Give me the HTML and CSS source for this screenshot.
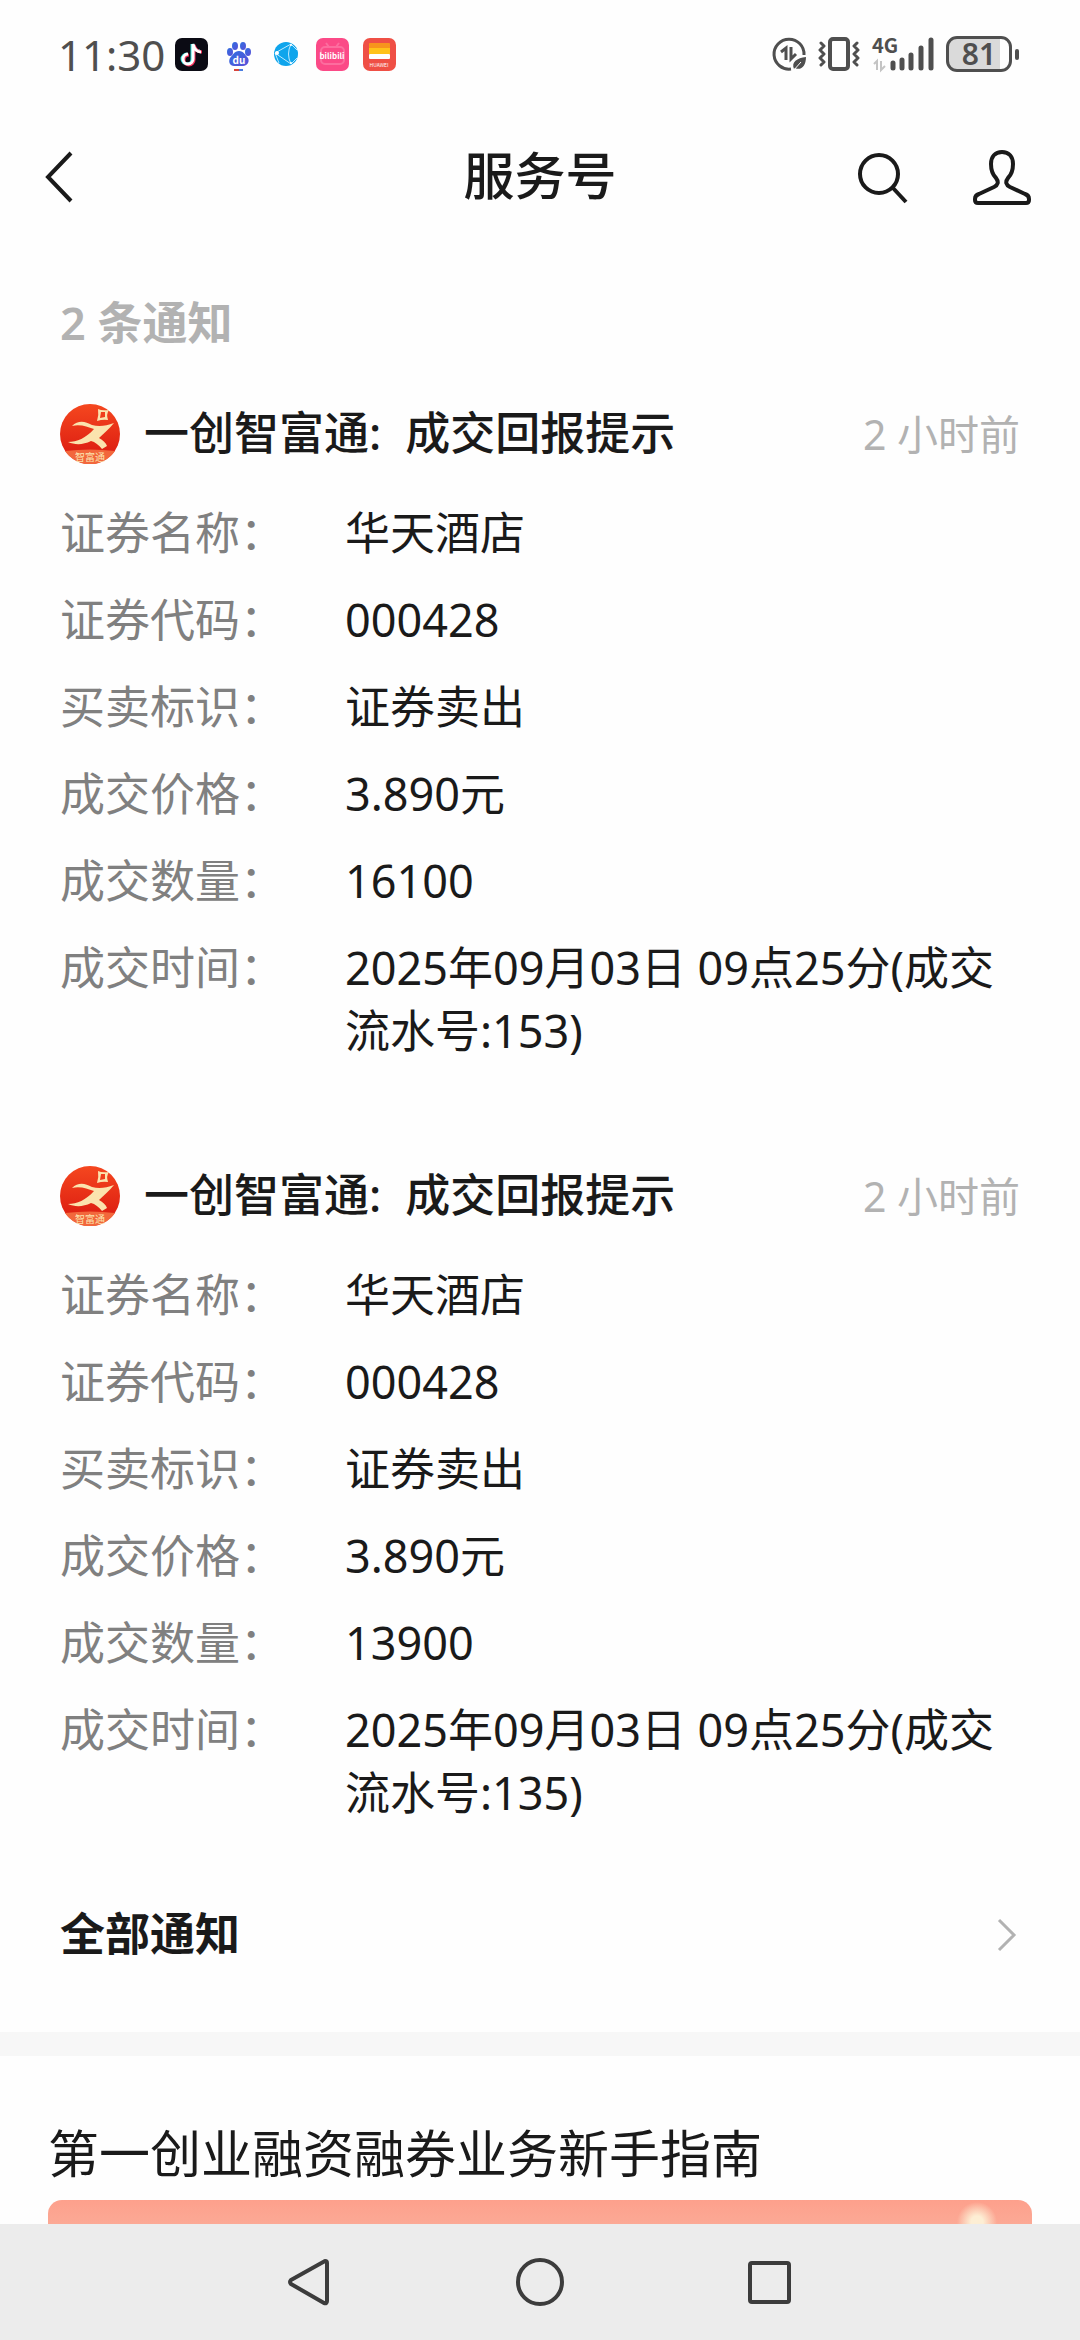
FILE: index.html
```html
<!DOCTYPE html>
<html lang="zh-CN">
<head>
    <meta charset="UTF-8">
    <meta name="viewport" content="width=device-width, initial-scale=1.0">
    <title>服务号</title>
    <link rel="stylesheet" href="styles.css">
</head>
<body>
    <div class="status-bar">
        <div class="status-left">
            <span class="clock">11:30</span>
            <div class="app-icons">
                <svg width="33" height="33" viewBox="0 0 33 33">
                    <rect width="33" height="33" rx="7" fill="#0b0b14"/>
                    <g fill="none" stroke-width="3">
                        <path d="M17 6 V21 A5 5 0 1 1 12 16 M17 6 Q19 13 25 13" stroke="#35e3df"/>
                        <path d="M19 7 V22 A5 5 0 1 1 14 17 M19 7 Q21 14 27 14" stroke="#f5335c"/>
                        <path d="M18 6 V21 A5 5 0 1 1 13 16 M18 6 Q20 14 26 14" stroke="#fff"/>
                    </g>
                </svg>
                <svg width="33" height="33" viewBox="0 0 33 33">
                    <defs>
                        <linearGradient id="paw" x1="0" y1="0" x2="1" y2="1">
                            <stop offset="0" stop-color="#2f6fe0"/>
                            <stop offset="1" stop-color="#5a4fd8"/>
                        </linearGradient>
                    </defs>
                    <g fill="url(#paw)">
                        <ellipse cx="13" cy="8" rx="3" ry="4"/>
                        <ellipse cx="21" cy="8" rx="3" ry="4"/>
                        <ellipse cx="8" cy="14" rx="3" ry="4"/>
                        <ellipse cx="26" cy="14" rx="3" ry="4"/>
                        <path d="M17 13 C22 13 23 17 26 20 C28 24 25 28 21 28 H12 C8 28 6 24 8 20 C11 17 12 13 17 13 Z"/>
                    </g>
                    <text x="17" y="26" class="du-text">du</text>
                    <path d="M12 32 H17" stroke="#d8463c" stroke-width="2"/>
                    <path d="M17 32 H21" stroke="#4a7de0" stroke-width="2"/>
                </svg>
                <svg width="33" height="33" viewBox="0 0 33 33">
                    <circle cx="17" cy="16" r="12" fill="#0fa5ec"/>
                    <path d="M6 15 L22 6 M6 15 L22 26 M22 6 Q17 16 22 26 M22 6 L28 12 M22 26 L28 20 M6 15 L10 25" fill="none" stroke="#bfeaff" stroke-width="1"/>
                    <circle cx="8" cy="15" r="2" fill="#fff"/>
                    <circle cx="22" cy="7" r="1" fill="#fff"/>
                    <circle cx="22" cy="25" r="1" fill="#fff"/>
                </svg>
                <svg width="33" height="33" viewBox="0 0 33 33">
                    <rect width="33" height="33" rx="7" fill="#fb4a87"/>
                    <rect x="5" y="9" width="23" height="17" rx="4" fill="none" stroke="#fc6d9e" stroke-width="2"/>
                    <path d="M10 5 L13 9 M23 5 L20 9" stroke="#fc6d9e" stroke-width="2"/>
                    <text x="16" y="21" class="bili-text">bilibili</text>
                </svg>
                <svg width="33" height="33" viewBox="0 0 33 33">
                    <rect width="33" height="33" rx="7" fill="#ef4f45"/>
                    <rect x="6" y="5" width="21" height="6" rx="1" fill="#f7941d"/>
                    <rect x="6" y="10" width="21" height="6" fill="#ffc21a"/>
                    <rect x="6" y="16" width="21" height="5" rx="1" fill="#fff"/>
                    <text x="16" y="29" class="huawei-text">HUAWEI</text>
                </svg>
            </div>
        </div>
        <div class="status-right">
            <svg width="36" height="36" viewBox="0 0 36 36" fill="none" stroke="#4f4f4f" stroke-width="3">
                <path d="M33 19 A15 15 0 1 0 20 33"/>
                <path d="M10 16 L15 12 V24 M20 11 V23 L25 18"/>
                <path d="M23 33 C20 26 26 22 35 21 C35 30 30 35 24 32 Z" fill="#4f4f4f" stroke="none"/>
                <path d="M22 35 L30 26" stroke="#fefefe" stroke-width="1"/>
            </svg>
            <svg width="42" height="36" viewBox="0 0 42 36" fill="none" stroke="#4f4f4f" stroke-linejoin="round" stroke-linecap="round">
                <rect x="12" y="3" width="18" height="30" rx="3" stroke-width="4"/>
                <path d="M3 7 L6 10 L2 14 L6 18 L2 22 L6 26 L3 29 M39 7 L36 10 L40 14 L36 18 L40 22 L36 26 L39 29" stroke-width="3"/>
            </svg>
            <svg class="signal" width="64" height="48" viewBox="0 0 64 48">
                <text x="1" y="23" class="net-text">4G</text>
                <path d="M3 34 L6 31 V40 M10 31 V40 L14 36" fill="none" stroke="#c4c4c4" stroke-width="2"/>
                <path d="M22 33 V38 M31 30 V38 M40 25 V38 M50 18 V38 M60 10 V38" stroke="#4f4f4f" stroke-width="5" stroke-linecap="round"/>
            </svg>
            <div class="battery"><span class="battery-level">81</span></div>
        </div>
    </div>

    <header class="nav-header">
        <button class="icon-btn back" aria-label="返回">
            <svg width="32" height="56" viewBox="0 0 32 56" fill="none" stroke="#1a1a1a" stroke-width="4">
                <path d="M26 4 L3 28 L26 52"/>
            </svg>
        </button>
        <h1>服务号</h1>
        <div class="header-actions">
            <button class="icon-btn" aria-label="搜索">
                <svg width="56" height="56" viewBox="0 0 56 56" fill="none" stroke="#1a1a1a" stroke-width="4">
                    <circle cx="24" cy="25" r="19"/>
                    <path d="M38 39 L51 53"/>
                </svg>
            </button>
            <button class="icon-btn" aria-label="我的">
                <svg width="62" height="56" viewBox="0 0 62 56" fill="none" stroke="#1a1a1a" stroke-width="4" stroke-linejoin="round">
                    <path d="M29 3 C22 3 18 8 18 15 C18 22 20 26 23 29 C26 33 25 36 21 38 L6 45 C3 46 2 48 2 50 V51 C2 53 3 54 5 54 H53 C55 54 56 53 56 51 V50 C56 48 55 46 52 45 L37 38 C33 36 32 33 35 29 C38 26 40 22 40 15 C40 8 36 3 29 3 Z"/>
                </svg>
            </button>
        </div>
    </header>

    <main>
        <section class="notices">
            <p class="count">2 条通知</p>

            <article class="notice">
                <div class="notice-head">
                    <svg class="avatar" viewBox="0 0 60 60">
                        <defs>
                            <linearGradient id="logoRed" x1="0" y1="0" x2="0" y2="1">
                                <stop offset="0" stop-color="#f5471f"/>
                                <stop offset="1" stop-color="#d8160f"/>
                            </linearGradient>
                        </defs>
                        <circle cx="30" cy="30" r="30" fill="url(#logoRed)"/>
                        <path d="M5 47 Q30 44 55 47 A30 30 0 0 1 5 47 Z" fill="#f2673c"/>
                        <path d="M38 5 Q42 7 49 6 Q46 10 48 16 Q43 15 37 17 Q39 11 38 5 Z M41 8 L40 14 L45 13 L45 8 Z" fill="#fbe3ae" fill-rule="evenodd"/>
                        <path d="M12 22 C18 16 25 17 32 21 C39 23 46 22 54 19 C49 25 44 29 39 34 C43 36 46 39 47 42 L42 45 C39 41 35 38 31 37 C23 41 15 41 8 38 C17 38 26 34 34 25 C27 23 21 20 12 22 Z" fill="#fbe3ae"/>
                        <text x="30" y="57" class="logo-text">智富通</text>
                    </svg>
                    <h2><span>一创智富通:</span><span>成交回报提示</span></h2>
                    <time>2 小时前</time>
                </div>
                <dl>
                    <dt>证券名称：</dt><dd>华天酒店</dd>
                    <dt>证券代码：</dt><dd>000428</dd>
                    <dt>买卖标识：</dt><dd>证券卖出</dd>
                    <dt>成交价格：</dt><dd>3.890元</dd>
                    <dt>成交数量：</dt><dd>16100</dd>
                    <dt>成交时间：</dt><dd>2025年09月03日 09点25分(成交流水号:153)</dd>
                </dl>
            </article>

            <article class="notice">
                <div class="notice-head">
                    <svg class="avatar" viewBox="0 0 60 60">
                        <circle cx="30" cy="30" r="30" fill="url(#logoRed)"/>
                        <path d="M5 47 Q30 44 55 47 A30 30 0 0 1 5 47 Z" fill="#f2673c"/>
                        <path d="M38 5 Q42 7 49 6 Q46 10 48 16 Q43 15 37 17 Q39 11 38 5 Z M41 8 L40 14 L45 13 L45 8 Z" fill="#fbe3ae" fill-rule="evenodd"/>
                        <path d="M12 22 C18 16 25 17 32 21 C39 23 46 22 54 19 C49 25 44 29 39 34 C43 36 46 39 47 42 L42 45 C39 41 35 38 31 37 C23 41 15 41 8 38 C17 38 26 34 34 25 C27 23 21 20 12 22 Z" fill="#fbe3ae"/>
                        <text x="30" y="57" class="logo-text">智富通</text>
                    </svg>
                    <h2><span>一创智富通:</span><span>成交回报提示</span></h2>
                    <time>2 小时前</time>
                </div>
                <dl>
                    <dt>证券名称：</dt><dd>华天酒店</dd>
                    <dt>证券代码：</dt><dd>000428</dd>
                    <dt>买卖标识：</dt><dd>证券卖出</dd>
                    <dt>成交价格：</dt><dd>3.890元</dd>
                    <dt>成交数量：</dt><dd>13900</dd>
                    <dt>成交时间：</dt><dd>2025年09月03日 09点25分(成交流水号:135)</dd>
                </dl>
            </article>

            <a class="all-link" href="#">
                全部通知
                <svg width="24" height="36" viewBox="0 0 24 36" fill="none" stroke="#b2b2b2" stroke-width="3">
                    <path d="M3 4 L18 19 L3 34"/>
                </svg>
            </a>
        </section>

        <section class="article">
            <h2>第一创业融资融券业务新手指南</h2>
            <div class="cover"></div>
        </section>
    </main>

    <nav class="system-nav">
        <button class="icon-btn" aria-label="后退">
            <svg width="48" height="48" viewBox="0 0 48 48" fill="none" stroke="#3c3c3c" stroke-width="4" stroke-linejoin="round">
                <path d="M38 3 Q40 3 40 5 V43 Q40 46 37 45 L4 26 Q2 24 4 22 Z"/>
            </svg>
        </button>
        <button class="icon-btn" aria-label="主屏幕">
            <svg width="48" height="48" viewBox="0 0 48 48" fill="none" stroke="#3c3c3c" stroke-width="4">
                <circle cx="24" cy="24" r="22"/>
            </svg>
        </button>
        <button class="icon-btn" aria-label="最近任务">
            <svg width="48" height="48" viewBox="0 0 48 48" fill="none" stroke="#3c3c3c" stroke-width="4">
                <rect x="5" y="5" width="39" height="39" rx="2"/>
            </svg>
        </button>
    </nav>
</body>
</html>
```
FILE: styles.css
```css
* {
    box-sizing: border-box;
    margin: 0;
    padding: 0;
}
body {
    display: flex;
    flex-direction: column;
    min-height: 100vh;
    background: #fefefe;
    color: #1a1a1a;
    font-family: "Noto Sans", "Noto Sans CJK SC", sans-serif;
    font-size: 45px;
    line-height: 63px;
}
svg {
    display: block;
    flex-shrink: 0;
}
.icon-btn {
    background: none;
    border: none;
    cursor: pointer;
}

/* status bar */
.status-bar {
    display: flex;
    justify-content: space-between;
    align-items: center;
    height: 108px;
    padding: 0 68px 0 58px;
    color: #4f4f4f;
}
.status-left,
.app-icons,
.status-right {
    display: flex;
    align-items: center;
}
.status-left {
    gap: 10px;
}
.app-icons {
    gap: 14px;
}
.status-right {
    gap: 11px;
}
.clock {
    font-size: 42px;
}
.signal {
    overflow: visible;
}
.battery {
    position: relative;
    width: 66px;
    height: 36px;
    border: 3px solid #4f4f4f;
    border-radius: 11px;
    background: linear-gradient(to right, #dadada 85%, #fefefe 85%);
    text-align: center;
}
.battery::after {
    content: "";
    position: absolute;
    top: 10px;
    right: -10px;
    width: 4px;
    height: 11px;
    border-radius: 2px;
    background: #4f4f4f;
}
.battery-level {
    display: block;
    font-size: 30px;
    font-weight: 600;
    line-height: 30px;
}
.net-text {
    font: 700 20px "Noto Sans CJK SC", sans-serif;
    fill: #4f4f4f;
}
.du-text,
.bili-text,
.huawei-text,
.logo-text {
    fill: #fff;
    text-anchor: middle;
    font-family: "Noto Sans CJK SC", sans-serif;
}
.du-text {
    font-size: 10px;
    font-weight: 700;
}
.bili-text {
    font-size: 8px;
    font-weight: 700;
}
.huawei-text {
    font-size: 5px;
}
.logo-text {
    font-size: 10px;
    fill: #fbe3ae;
}

/* page header */
.nav-header {
    display: grid;
    grid-template-columns: 1fr auto 1fr;
    align-items: center;
    height: 138px;
    padding: 0 45px;
}
.nav-header h1 {
    padding-bottom: 4px;
    font-size: 51px;
    font-weight: 500;
}
.back {
    justify-self: start;
}
.header-actions {
    display: flex;
    justify-content: flex-end;
    gap: 62px;
}

/* notices */
main {
    display: flex;
    flex: 1;
    flex-direction: column;
}
.notices {
    padding: 45px 60px 67px;
    border-bottom: 24px solid #f7f7f7;
}
.count {
    margin-bottom: 50px;
    color: #b2b2b2;
    font-weight: 600;
}
.notice {
    margin-bottom: 104px;
}
.notice:last-of-type {
    margin-bottom: 78px;
}
.notice-head {
    display: flex;
    align-items: center;
    height: 60px;
    margin-bottom: 37px;
}
.avatar {
    width: 60px;
    height: 60px;
    margin-right: 24px;
}
.notice-head h2 {
    display: flex;
    gap: 24px;
    padding-bottom: 4px;
    font-size: 45px;
    font-weight: 500;
}
.notice-head time {
    margin-left: auto;
    color: #b2b2b2;
    font-size: 41px;
}
dl {
    display: grid;
    grid-template-columns: 285px 1fr;
    row-gap: 24px;
}
dt {
    color: #808080;
}
.all-link {
    display: flex;
    justify-content: space-between;
    align-items: center;
    color: inherit;
    font-weight: 700;
    text-decoration: none;
}

/* article */
.article {
    display: flex;
    flex: 1;
    flex-direction: column;
    padding: 65px 48px 0;
}
.article h2 {
    margin-bottom: 15px;
    font-size: 51px;
    font-weight: 400;
    line-height: 64px;
}
.cover {
    flex: 1;
    min-height: 24px;
    border-radius: 14px 14px 0 0;
    background:
        radial-gradient(ellipse 20px 20px at 929px 22px, #fdeed4 30%, transparent),
        linear-gradient(#fda08c, #fca995);
}

/* system navigation */
.system-nav {
    display: flex;
    justify-content: center;
    align-items: center;
    gap: 181px;
    height: 116px;
    background: #ececec;
}
```
